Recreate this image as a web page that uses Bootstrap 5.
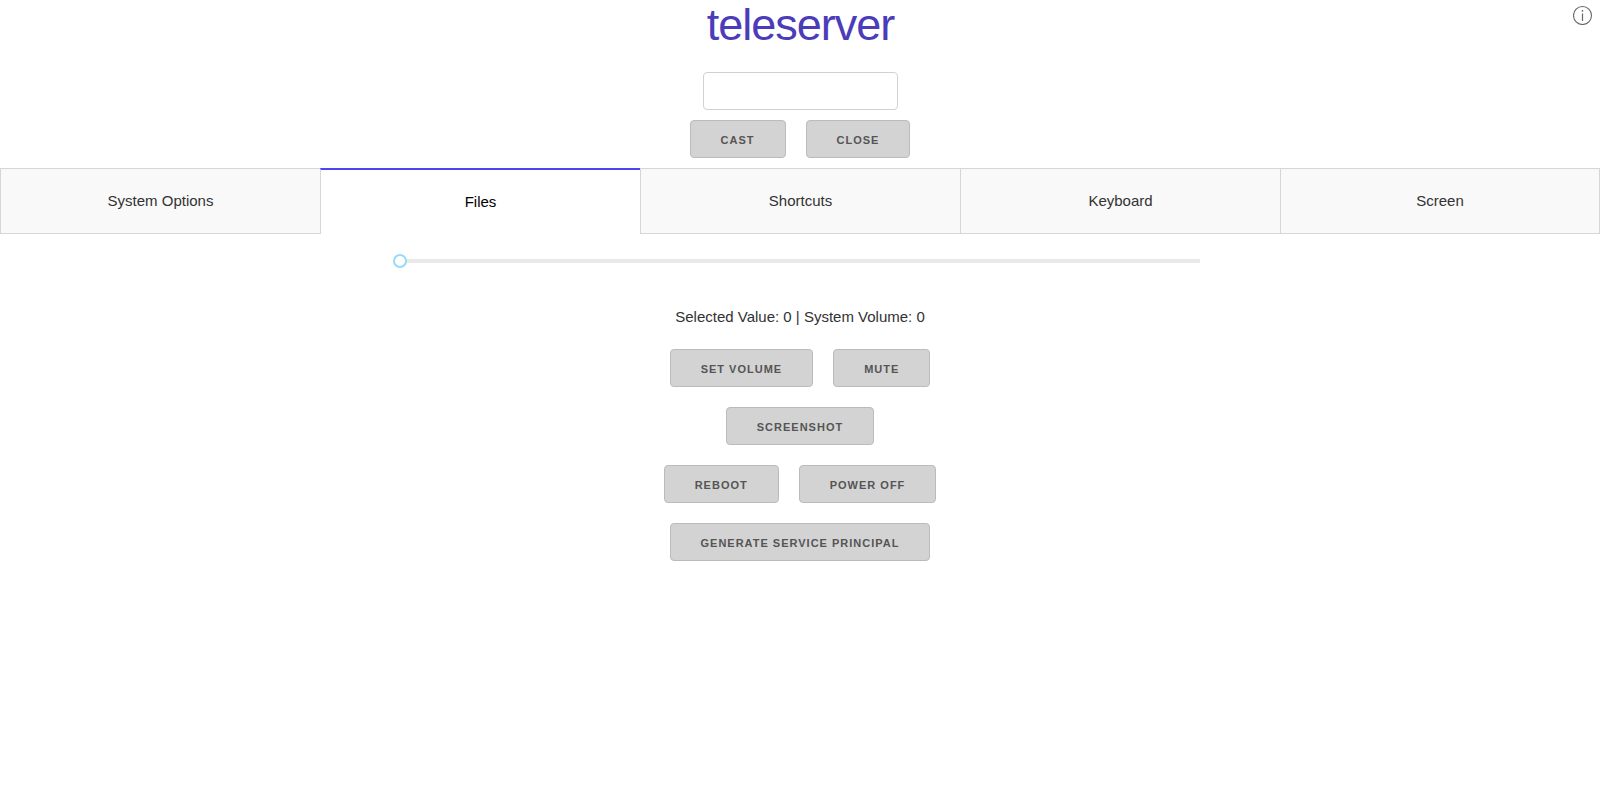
<!DOCTYPE html>
<html lang="en">
<head>
<meta charset="utf-8">
<meta name="viewport" content="width=device-width, initial-scale=1">
<title>teleserver</title>
<link href="https://cdn.jsdelivr.net/npm/bootstrap@5.3.0/dist/css/bootstrap.min.css" rel="stylesheet">
<style>
body { font: 400 15px/24px "Liberation Sans", Arial, sans-serif; color: #323232; background: #fff; }
.brand-title { font-size: 45px; line-height: 50px; letter-spacing: -1px; font-weight: 300; color: #4b3cba; margin-bottom: 22px; padding-left: 1px; }
.info-mark { top: 5px; right: 7px; line-height: 0; }
.cast-input { width: 195px; height: 38px; border: 1px solid #d1d1d1; border-radius: 4px; padding: 6px 10px; font-size: 15px; }
.btn-tele { --bs-btn-padding-x: 30px; --bs-btn-padding-y: 0; --bs-btn-font-size: 11px; --bs-btn-font-weight: 600; --bs-btn-line-height: 36px;
  --bs-btn-bg: #d3d3d3; --bs-btn-color: #555; --bs-btn-border-color: #bbb; --bs-btn-border-radius: 4px;
  --bs-btn-hover-bg: #d3d3d3; --bs-btn-hover-color: #333; --bs-btn-hover-border-color: #888;
  height: 38px; letter-spacing: 1px; text-transform: uppercase; white-space: nowrap; }
.btn-tele span { position: relative; top: 1px; }
.btn-pair { gap: 20px; }
.cast-row { margin: 10px 0; }
.tab-strip { height: 66px; }
.tab-strip .nav-link { padding: 20px 0; color: #323232; background: #f9f9f9; border: 1px solid #d6d6d6; border-right: 0; border-radius: 0; line-height: 24px; }
.tab-strip .nav-item:last-child .nav-link { border-right: 1px solid #d6d6d6; }
.tab-strip .nav-link.active { color: #000; background: #fff; border-top: 2px solid #4b46f0; border-bottom: 0; height: 66px; }
.tab-strip .nav-item { flex-basis: 0; }
.volume-slider { width: 800px; height: 14px; margin-top: 20px; margin-bottom: 37px; }
.volume-rail { height: 4px; background: #e9e9e9; }
.volume-handle { width: 14px; height: 14px; left: -7px; top: 0; border: 2px solid #96dbfa; border-radius: 50%; background: #fff; }
.button-rows { gap: 20px; margin-top: 20px; }
</style>
</head>
<body>
<header class="position-relative d-flex flex-column align-items-center">
  <h1 class="brand-title">teleserver</h1>
  <a class="info-mark position-absolute" href="#" aria-label="Information">
    <svg width="20" height="20" viewBox="0 0 20 20" fill="none" stroke="#666"><circle cx="9.5" cy="10.5" r="9" stroke-width="1.1"/><path d="M9.5 8.5v7.5" stroke-width="1.2"/><path d="M9.5 5v1.6" stroke-width="1.4"/></svg>
  </a>
  <input class="cast-input" type="text" aria-label="Address">
  <div class="cast-row btn-pair d-flex">
    <button class="btn btn-tele"><span>Cast</span></button>
    <button class="btn btn-tele"><span>Close</span></button>
  </div>
</header>
<ul class="tab-strip nav nav-fill flex-nowrap">
  <li class="nav-item"><a class="nav-link" href="#">System Options</a></li>
  <li class="nav-item"><a class="nav-link active" href="#">Files</a></li>
  <li class="nav-item"><a class="nav-link" href="#">Shortcuts</a></li>
  <li class="nav-item"><a class="nav-link" href="#">Keyboard</a></li>
  <li class="nav-item"><a class="nav-link" href="#">Screen</a></li>
</ul>
<main class="d-flex flex-column align-items-center">
  <div class="volume-slider position-relative d-flex align-items-center">
    <div class="volume-rail w-100"></div>
    <div class="volume-handle position-absolute"></div>
  </div>
  <div>Selected Value: 0 | System Volume: 0</div>
  <div class="button-rows d-flex flex-column align-items-center">
    <div class="btn-pair d-flex">
      <button class="btn btn-tele"><span>Set Volume</span></button>
      <button class="btn btn-tele"><span>Mute</span></button>
    </div>
    <button class="btn btn-tele"><span>Screenshot</span></button>
    <div class="btn-pair d-flex">
      <button class="btn btn-tele"><span>Reboot</span></button>
      <button class="btn btn-tele"><span>Power Off</span></button>
    </div>
    <button class="btn btn-tele"><span>Generate Service Principal</span></button>
  </div>
</main>
<script src="https://cdn.jsdelivr.net/npm/bootstrap@5.3.0/dist/js/bootstrap.bundle.min.js"></script>
</body>
</html>
